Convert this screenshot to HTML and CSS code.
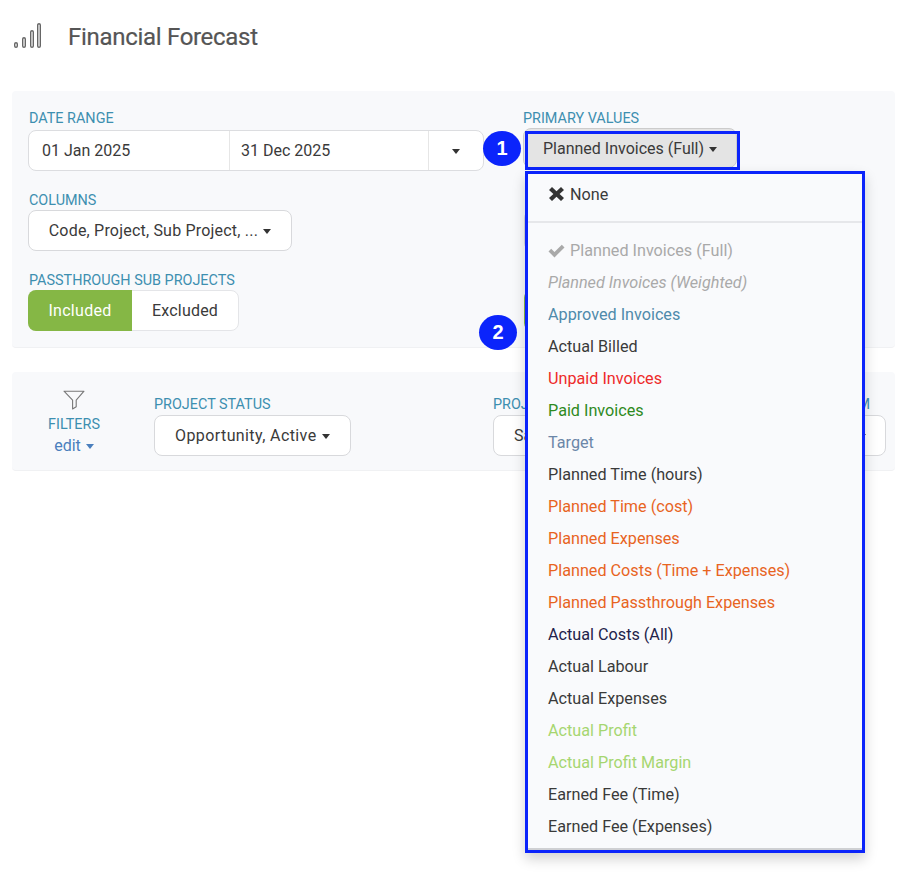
FILE: index.html
```html
<!DOCTYPE html>
<html lang="en">
<head>
  <meta charset="UTF-8">
  <title>Financial Forecast</title>
  <link rel="stylesheet" href="styles.css">
</head>
<body>

  <header class="page-header">
    <svg class="forecast-icon" width="30" height="27" viewBox="0 0 30 27" fill="none" stroke="#666" stroke-width="1.4">
      <rect x="1.700" y="19.700" width="2.600" height="4.600" rx="1.300"/>
      <rect x="9.700" y="14.700" width="2.600" height="9.600" rx="1.300"/>
      <rect x="17.700" y="7.700" width="2.600" height="16.600" rx="1.300"/>
      <rect x="24.700" y="0.700" width="2.600" height="23.600" rx="1.300"/>
    </svg>
    <h1>Financial Forecast</h1>
  </header>

  <section class="panel settings">
    <div class="col-left">
      <div class="field">
        <label>DATE RANGE</label>
        <div class="date-range">
          <div class="date">01 Jan 2025</div>
          <div class="date date-end">31 Dec 2025</div>
          <div class="date-toggle"><span class="caret"></span></div>
        </div>
      </div>
      <div class="field">
        <label>COLUMNS</label>
        <button class="select columns-select">Code, Project, Sub Project, ... <span class="caret"></span></button>
      </div>
      <div class="field">
        <label>PASSTHROUGH SUB PROJECTS</label>
        <div class="toggle">
          <div class="toggle-on">Included</div>
          <div class="toggle-off">Excluded</div>
        </div>
      </div>
    </div>
    <div class="col-right">
      <label>PRIMARY VALUES</label>
      <button class="select primary-select">Planned Invoices (Full) <span class="caret"></span></button>
      <div class="covered-select"></div>
      <div class="covered-toggle"></div>
    </div>
  </section>

  <section class="panel filters">
    <div class="filter-head">
      <svg width="22" height="20" viewBox="0 0 22 20" fill="none" stroke="#777" stroke-width="1.1" stroke-linejoin="round">
        <path d="M1 1.200h20l-7.800 9v6.600l-3.600 2.200v-8.800z"/>
      </svg>
      <div class="filter-title">FILTERS</div>
      <div class="filter-edit">edit <span class="caret blue"></span></div>
    </div>
    <div class="filter-field status">
      <label>PROJECT STATUS</label>
      <button class="select">Opportunity, Active <span class="caret"></span></button>
    </div>
    <div class="filter-field project">
      <label>PROJECT</label>
      <button class="select wide">Sa</button>
    </div>
    <div class="filter-field team">
      <label class="right">TEAM</label>
      <button class="select wide"><span class="caret"></span></button>
    </div>
  </section>

  <div class="badge badge-one">1</div>
  <div class="badge badge-two">2</div>
  <div class="highlight"></div>

  <ul class="menu">
    <li class="none"><svg class="glyph" width="17" height="16" viewBox="0 0 17 16"><path d="M4 1 8.500 5.200 13 1 16 4 11.600 8 16 12 13 15 8.500 10.800 4 15 1 12 5.400 8 1 4z" fill="#333"/></svg>None</li>
    <li class="divider"></li>
    <li class="disabled"><svg class="glyph" width="17" height="14" viewBox="0 0 17 14"><path d="M0.500 7.500 3.200 4.800 6.500 8 13.800 0.700 16.500 3.400 6.500 13.400z" fill="#a9a9a9"/></svg>Planned Invoices (Full)</li>
    <li class="weighted">Planned Invoices (Weighted)</li>
    <li class="c-approved">Approved Invoices</li>
    <li>Actual Billed</li>
    <li class="c-unpaid">Unpaid Invoices</li>
    <li class="c-paid">Paid Invoices</li>
    <li class="c-target">Target</li>
    <li>Planned Time (hours)</li>
    <li class="c-planned">Planned Time (cost)</li>
    <li class="c-planned">Planned Expenses</li>
    <li class="c-planned">Planned Costs (Time + Expenses)</li>
    <li class="c-planned">Planned Passthrough Expenses</li>
    <li class="c-costs">Actual Costs (All)</li>
    <li>Actual Labour</li>
    <li>Actual Expenses</li>
    <li class="c-profit">Actual Profit</li>
    <li class="c-profit">Actual Profit Margin</li>
    <li>Earned Fee (Time)</li>
    <li>Earned Fee (Expenses)</li>
  </ul>

</body>
</html>
```

FILE: styles.css
```css
* {
  box-sizing: border-box;
}

body {
  margin: 0;
  height: 872px;
  overflow: hidden;
  position: relative;
  background-color: #fff;
  color: #3a3a3a;
  font-family: Roboto, "Liberation Sans", sans-serif;
  font-size: 16px;
}

.page-header {
  display: flex;
  align-items: center;
  gap: 25px;
  height: 91px;
  padding: 0 0 18px 13px;
}

.page-header h1 {
  margin: 0;
  font-size: 24px;
  font-weight: 400;
  letter-spacing: -0.3px;
  color: #555;
  -webkit-text-stroke: 0.2px #555;
}

.panel {
  margin: 0 11px 0 12px;
  background-color: #f8f9fb;
  border-radius: 4px;
  border-bottom: 1px solid #f0f1f3;
}

label {
  display: block;
  margin-bottom: 1px;
  padding-top: 1px;
  font-size: 14.400px;
  line-height: 16px;
  color: #3d8fb0;
}

.settings {
  display: flex;
  height: 257px;
  padding: 19px 16px 0;
}

.col-left {
  width: 495px;
}

.col-left label {
  padding-left: 1px;
}

.field {
  margin-bottom: 21px;
}

.date-range {
  display: flex;
  width: 456px;
  height: 41px;
  margin-top: 3px;
  background-color: #fff;
  border: 1px solid #dcdde0;
  border-radius: 8px;
}

.date {
  width: 200px;
  padding-left: 13px;
  line-height: 39px;
}

.date.date-end {
  padding-left: 11px;
  border-left: 1px solid #e6e6e6;
  border-right: 1px solid #e6e6e6;
}

.date-toggle {
  flex: 1;
  padding-right: 2px;
  text-align: center;
  line-height: 39px;
}

.caret {
  display: inline-block;
  width: 0;
  height: 0;
  margin-left: 1px;
  vertical-align: middle;
  border-top: 5px solid #333;
  border-left: 4.500px solid transparent;
  border-right: 4.500px solid transparent;
}

.caret.blue {
  border-top-color: #4a7fbd;
}

.select {
  height: 41px;
  padding: 0 20px;
  background-color: #fff;
  border: 1px solid #d8d9dc;
  border-radius: 8px;
  color: #3a3a3a;
  font-family: inherit;
  font-size: 16px;
}

.columns-select {
  display: block;
  width: 264px;
  padding: 0;
  letter-spacing: 0.2px;
}

.toggle {
  display: flex;
  width: 211px;
  height: 41px;
  background-color: #fff;
  border: 1px solid #e4e5e8;
  border-radius: 8px;
  line-height: 39px;
  text-align: center;
}

.toggle-on {
  width: 104px;
  margin: -1px 0 -1px -1px;
  line-height: 41px;
  letter-spacing: 0.3px;
  background-color: #85b745;
  border-radius: 8px 0 0 8px;
  color: #fff;
}

.toggle-off {
  flex: 1;
  letter-spacing: 0.2px;
}

.primary-select {
  display: block;
  width: 214px;
  height: 40px;
  padding: 0;
  background-color: #e4e4e4;
  border-color: #ccc;
}

.covered-select {
  width: 200px;
  height: 41px;
  margin: 42px 0 0 1px;
  background-color: #fff;
  border: 1px solid #d8d9dc;
  border-radius: 8px;
}

.covered-toggle {
  width: 200px;
  height: 41px;
  margin: 39px 0 0 1px;
  background-color: #85b745;
  border-radius: 8px;
}

.filters {
  display: flex;
  height: 99px;
  margin-top: 24px;
  position: relative;
}

.filter-head {
  width: 124px;
  margin-right: 18px;
  padding-top: 18px;
  text-align: center;
}

.filter-head svg {
  display: block;
  margin: 0 auto 7px;
}

.filter-title {
  font-size: 14.400px;
  line-height: 16px;
  color: #3d8fb0;
}

.filter-edit {
  margin-top: 3px;
  line-height: 20px;
  color: #4a7fbd;
}

.filter-field {
  padding-top: 24px;
}

.filter-field .select {
  margin-top: 1px;
}

.status {
  width: 339px;
}

.project {
  width: 393px;
}

.status .select {
  width: 197px;
  padding: 0;
  letter-spacing: 0.4px;
}

.wide {
  width: 370px;
  text-align: left;
}

.team {
  position: absolute;
  right: 9px;
}

.team .wide {
  width: 200px;
  text-align: right;
  padding-right: 19px;
}

.right {
  text-align: right;
  padding-right: 16px;
}

.badge {
  position: absolute;
  width: 38px;
  height: 35px;
  border-radius: 50%;
  background-color: #0b24fb;
  color: #fff;
  font-family: "Liberation Sans", sans-serif;
  font-size: 20px;
  font-weight: 700;
  line-height: 35px;
  text-align: center;
}

.badge-one {
  left: 483px;
  top: 131px;
}

.badge-two {
  left: 479px;
  top: 315px;
}

.highlight {
  position: absolute;
  left: 525px;
  top: 131px;
  width: 215px;
  height: 39px;
  border: 3px solid #0b24fb;
}

.menu {
  position: absolute;
  left: 525px;
  top: 171px;
  width: 340px;
  height: 682px;
  margin: 0;
  padding: 5px 0 0;
  list-style: none;
  background-color: #f9fafc;
  border: 3px solid #0b24fb;
  box-shadow: 0 6px 12px rgba(0, 0, 0, 0.18), inset 0 -2px 0 #cfd0d3;
}

.menu li {
  padding-left: 20px;
  font-size: 16.200px;
  line-height: 32px;
  color: #3a3a3a;
  white-space: nowrap;
}

.menu .divider {
  height: 2px;
  margin: 10px 0 12px;
  padding: 0;
  background-color: #e6e7ea;
}

.glyph {
  margin-right: 5px;
  vertical-align: -2px;
}

.menu .disabled {
  color: #a9a9a9;
}

.menu .weighted {
  color: #a9a9a9;
  font-style: italic;
}

.menu .c-approved {
  color: #4f8aab;
}

.menu .c-unpaid {
  color: #ee2a2a;
}

.menu .c-paid {
  color: #2f8a1e;
}

.menu .c-target {
  color: #6b86a8;
}

.menu .c-planned {
  color: #e8641f;
}

.menu .c-costs {
  color: #22224a;
}

.menu .c-profit {
  color: #a6d670;
}
```
